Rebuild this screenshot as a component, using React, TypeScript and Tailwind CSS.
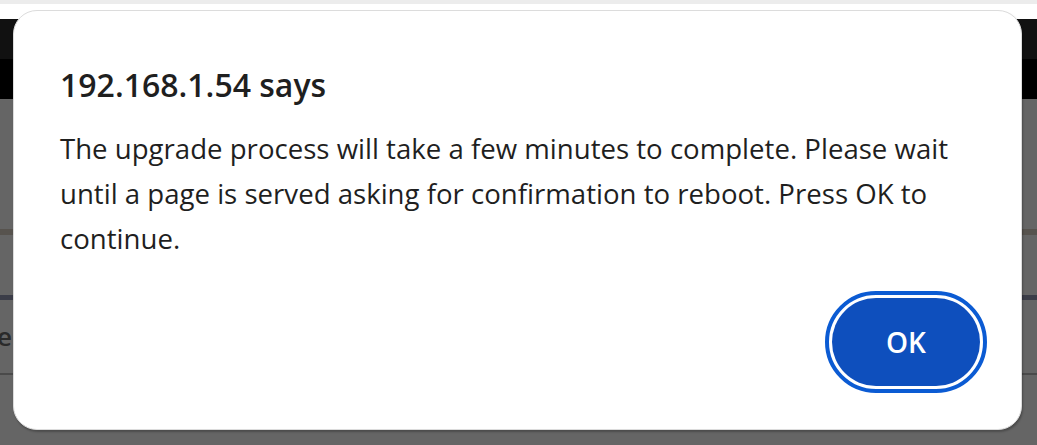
export default function App() {
  return (
    <div className="relative h-[445px] w-[1037px] overflow-hidden bg-[#656565]" style={{ fontFamily: '"Open Sans", "Noto Sans", sans-serif' }}>
      {/* page behind the dimmed overlay */}
      <div className="h-[4px] bg-[#ececec]" />
      <div className="h-[15px] bg-white" />
      <div className="h-[40px] bg-[#111111]" />
      <div className="h-[40px] bg-black" />
      <div className="h-[130px]" />
      <div className="h-[6px] bg-[#57534e]" />
      <div className="h-[60px]" />
      <div className="h-[5px] bg-[#3b3d48]" />
      <div className="flex h-[73px] items-center text-[26px] font-semibold text-[#2a2a2a]">
        <span className="-ml-[3px]">e</span>
      </div>
      <div className="h-[2px] bg-[#4a4a4a]" />

      {/* alert dialog */}
      <div className="absolute left-[13px] top-[10px] flex h-[420px] w-[1009px] flex-col rounded-[24px] border border-[#dcdcdc] bg-white pl-[46px] pr-[41px] shadow-[1px_2px_2px_rgba(0,0,0,0.25)]">
        <h1 className="mt-[52px] text-[32px] font-semibold leading-[44px] text-[#1f1f1f]">192.168.1.54 says</h1>
        <p className="mt-[19px] w-[905px] text-[27.6px] leading-[45px] text-[#1f1f1f]">
          The upgrade process will take a few minutes to complete. Please wait until a page is served asking for confirmation to reboot. Press OK to continue.
        </p>
        <div className="mt-auto mb-[43px] flex justify-end">
          <button className="h-[88px] w-[148px] rounded-full bg-[#0e4fbd] text-[28px] font-semibold text-white outline-[4px] outline-offset-[3px] outline-[#0b5bd3]">
            OK
          </button>
        </div>
      </div>
    </div>
  );
}
